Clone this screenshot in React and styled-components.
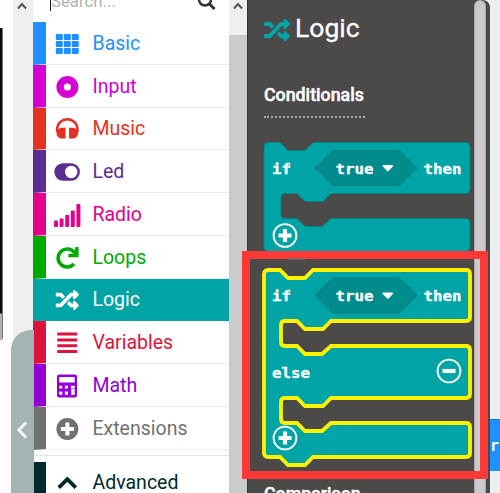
import React from 'react';
import styled, { createGlobalStyle } from 'styled-components';

const Global = createGlobalStyle`
  * { box-sizing: border-box; }
  body { margin: 0; overflow: hidden; font-family: Roboto, sans-serif; }
`;

const Screen = styled.div`
  position: relative;
  display: grid;
  grid-template-columns: 13px 20px 196px 18px 243px 10px;
  width: 500px;
  height: 493px;
  overflow: hidden;
  background: #fdfdff;
`;

const Simulator = styled.div`
  padding-top: 28px;
  overflow: hidden;
`;
const Device = styled.div`
  width: 3px;
  height: 312px;
  border-radius: 0 3px 10px 0;
  background: linear-gradient(#0a0a0a 0 285px, #b0b0b0 286px);
  border-right: 1px solid #777;
`;

const Scrollbar = styled.div`
  display: flex;
  flex-direction: column;
  background: #efefef;
`;
const ArrowUp = styled.svg`
  display: block;
  width: 10px;
  height: 8px;
  margin: 2px 0 0 4px;
  flex: none;
`;
const Thumb = styled.div`
  flex: 1;
  margin-top: 25px;
  background: #cbcbcb;
`;

const Toolbox = styled.nav`
  background: #fff;
  overflow: hidden;
`;
const Search = styled.div`
  display: flex;
  justify-content: space-between;
  height: 22px;
  padding: 0 13px 0 17px;
`;
const SearchText = styled.span`
  height: 20px;
  border-left: 1px solid #222;
  margin-top: -9px;
  font-size: 16.8px;
  line-height: 20px;
  color: #b0b0b0;
`;
const SearchIcon = styled.svg`
  width: 19px;
  height: 19px;
  margin-top: -9px;
`;
const Row = styled.div`
  display: flex;
  align-items: center;
  height: 42.75px;
  border-left: 13px solid ${p => p.$color};
  border-bottom: 1px solid ${p => (p.$active ? p.$color : '#e8eeee')};
  padding: 2.2px 0 0 7.2px;
  gap: 11.3px;
  font-size: 19.5px;
  color: ${p => (p.$active ? '#fff' : p.$color)};
  background: ${p => (p.$active ? p.$color : '#fff')};
`;
const RowIcon = styled.svg`
  width: 28px;
  height: 28px;
  flex: none;
  fill: currentColor;
`;
const RowLabel = styled.span`
  line-height: 24px;
`;
const Separator = styled.div`
  height: 12px;
  padding-top: 5px;
  &::after { content: ''; display: block; height: 1px; background: #dfe5e5; }
`;

const Flyout = styled.section`
  display: grid;
  grid-template-columns: 1fr 12px 4px;
  background: #4c4949;
  border-left: 1px solid #343232;
  border-radius: 0 7px 0 0;
  overflow: hidden;
`;
const FlyoutBody = styled.div`
  padding-left: 16px;
  overflow: hidden;
`;
const FlyoutThumb = styled.div`
  background: #cbc9cc;
  border: 1px solid #aaa8aa;
  border-bottom: 0;
  border-radius: 6px 6px 0 0;
`;
const Heading = styled.header`
  display: flex;
  align-items: center;
  gap: 5px;
  height: 56px;
  color: #fff;
  font-size: 26.5px;
  line-height: 30px;
  -webkit-text-stroke: 0.3px #fff;
`;
const HeadingIcon = styled.svg`
  width: 26px;
  height: 26px;
  margin-top: 3px;
  fill: #00a4a6;
  flex: none;
`;
const GroupTitle = styled.h2`
  width: 101px;
  height: 33px;
  margin: ${p => p.$top}px 0 0;
  border-bottom: 2px dotted #aaa8a8;
  font-size: 17.8px;
  line-height: 20px;
  font-weight: 500;
  -webkit-text-stroke: 0.45px #fff;
  color: #fff;
`;
const BlockCanvas = styled.svg`
  display: block;
  width: 226px;
  height: 345px;
  margin-top: 17px;
  overflow: visible;
  font: bold 14px 'DejaVu Sans Mono', monospace;
  fill: #fff;
  text { stroke: #fff; stroke-width: 0.3px; }
`;

const Workspace = styled.div`
  display: flex;
  align-items: flex-start;
  padding-top: 419px;
  background: #ebeff1;
  overflow: hidden;
`;
const WorkspaceBlock = styled.div`
  width: 10px;
  height: 52px;
  background: #1e90ff;
  border-top: 1px solid #1877d2;
  font: bold 15px/52px 'DejaVu Sans Mono', monospace;
  color: #fff;
`;

const CollapseTab = styled.button`
  position: absolute;
  left: 11px;
  top: 330px;
  width: 23px;
  height: 163px;
  display: flex;
  align-items: flex-start;
  padding: 91px 0 0 4px;
  border: 0;
  border-radius: 20px 0 0 0;
  background: #a5b3b4;
`;
const Highlight = styled.div`
  position: absolute;
  left: 242px;
  top: 251px;
  width: 245.5px;
  height: 228px;
  border: 8px solid #fd3836;
`;

const shuffle =
  'M504.971 359.029c9.373 9.373 9.373 24.569 0 33.941l-80 79.984c-15.01 15.01-40.971 4.49-40.971-16.971V416h-58.785a12.004 12.004 0 0 1-8.773-3.812l-70.556-75.596 53.333-57.143L352 336h32v-39.981c0-21.438 25.943-31.998 40.971-16.971l80 79.981zM12 176h84l52.781 56.551 53.333-57.143-70.556-75.596A11.999 11.999 0 0 0 122.785 96H12c-6.627 0-12 5.373-12 12v56c0 6.627 5.373 12 12 12zm372 0v39.984c0 21.46 25.961 31.98 40.971 16.971l80-79.984c9.373-9.373 9.373-24.569 0-33.941l-80-79.981C409.943 24.021 384 34.582 384 56.019V96h-58.785a12.004 12.004 0 0 0-8.773 3.812L96 336H12c-6.627 0-12 5.373-12 12v56c0 6.627 5.373 12 12 12h110.785c3.326 0 6.503-1.381 8.773-3.812L352 176h32z';

const icons = {
  Basic: [4, 11, 18].flatMap((y) =>
    [2.8, 10.8, 18.8].map((x) => <rect key={`${x}-${y}`} x={x} y={y} width="7" height="6" rx="1" />)
  ),
  Input: <path fillRule="evenodd" d="M14.400 3a11 11 0 1 0 0 22 11 11 0 0 0 0-22zm0 7.400a3.600 3.600 0 1 1 0 7.200 3.600 3.600 0 0 1 0-7.200z" />,
  Music: (
    <>
      <path d="M4.100 17v-2.600a10.200 10.200 0 0 1 20.400 0V17" fill="none" stroke="currentColor" strokeWidth="2.500" />
      <path d="M12.600 12.800v10.800H8.900a5.400 5.400 0 0 1 0-10.800zM16 12.800v10.800h3.700a5.400 5.400 0 0 0 0-10.800z" />
    </>
  ),
  Led: <path fillRule="evenodd" d="M10 5.300h8.200a8.700 8.700 0 0 1 0 17.400H10a8.700 8.700 0 0 1 0-17.400zm8.200 2.500a6.200 6.200 0 1 0 0 12.400 6.200 6.200 0 0 0 0-12.400z" />,
  Radio: [[1, 19.500], [6.600, 17.500], [12.200, 14], [17.800, 9.500], [23.400, 3]].map(([x, y]) => (
    <rect key={x} x={x} y={y} width="4" height={26 - y} rx="1" />
  )),
  Loops: (
    <>
      <path d="M21 19.800A9 9 0 1 1 21.500 8.800" fill="none" stroke="currentColor" strokeWidth="3.600" />
      <path d="M25.600 3v10.200H15.400V9.800h5.400L22.600 3z" />
    </>
  ),
  Logic: <path d={shuffle} transform="translate(2.8 2.5) scale(.045)" />,
  Variables: [3.600, 9.400, 15.200, 21].map((y) => <rect key={y} x="4.200" y={y} width="20" height="3" rx=".6" />),
  Math: (
    <path
      fillRule="evenodd"
      d="M6 2.600h16a2 2 0 0 1 2 2v19a2 2 0 0 1-2 2H6a2 2 0 0 1-2-2v-19a2 2 0 0 1 2-2zm.300 2.300v5.500h15.400V4.900zM6.300 13.700v2.800h3v-2.800zm5.600 0v2.800h3v-2.800zm6 0v2.800h3.800v-2.800zM6.300 19.500v3.200h3v-3.200zm5.600 0v3.200h3v-3.200zM18.300 17v6h3.400v-6z"
    />
  ),
  Extensions: <path fillRule="evenodd" d="M14.400 3a11 11 0 1 0 0 22 11 11 0 0 0 0-22zm-2 4.500h4V12h4.500v4h-4.500v4.500h-4V16H7.900v-4h4.500z" />,
  Advanced: <path d="M5.800 18.700 14.300 10.200l8.500 8.500" fill="none" stroke="currentColor" strokeWidth="3.800" />,
};

const categories = [
  ['Basic', '#1e90ff'],
  ['Input', '#d400d4'],
  ['Music', '#e63022'],
  ['Led', '#5c2d91'],
  ['Radio', '#e3008c'],
  ['Loops', '#00aa00'],
  ['Logic', '#00a4a6'],
  ['Variables', '#dc143c'],
  ['Math', '#9400d3'],
  ['Extensions', '#717171'],
];

const Category = ({ name, color }) => (
  <Row $color={color} $active={name === 'Logic'}>
    <RowIcon viewBox="0 0 28 28">{icons[name]}</RowIcon>
    <RowLabel>{name}</RowLabel>
  </Row>
);

const ScrollArrow = () => (
  <ArrowUp viewBox="0 0 10 8">
    <path d="M1 6.500 5 2l4 4.500" fill="none" stroke="#555" strokeWidth="2" />
  </ArrowUp>
);

// Block outlines are drawn in block-local coordinates with the top left corner at 0,0.
const notch = 'h12l8 8h17l8-8';
const mouth = 'H67l-8 8H41l-8-8H21q-4 0-4 4v17q0 4 4 4h12l8 8h17l9-8';
const right = 'H202q4 0 4 4';
const ifPath = `M0 4q0-4 4-4${notch}${right}V47q0 4-4 4${mouth}${right}v25q0 4-4 4H49l-8 8H24l-8-8H4q-4 0-4-4z`;
const ifElsePath = `M0 4q0-4 4-4${notch}${right}V47q0 4-4 4${mouth}${right}V124q0 4-4 4${mouth}${right}v26q0 4-4 4H49l-8 8H24l-8-8H4q-4 0-4-4z`;

const BlockText = ({ x, y, width, children }) => (
  <text x={x} y={y} textLength={width} lengthAdjust="spacingAndGlyphs">{children}</text>
);

const Condition = () => (
  <>
    <BlockText x={8} y={31} width={19}>if</BlockText>
    <path d="M51 25.500 68.500 8h67L153 25.500 135.500 43h-67z" fill="#008b8d" stroke="#007f81" />
    <BlockText x={71.500} y={31} width={38}>true</BlockText>
    <path d="M119.500 22.500h8.500q2 0 .8 1.600l-4 4.200q-1 1-2 0l-4-4.200q-1.200-1.600.7-1.600z" />
    <BlockText x={159.500} y={31} width={38}>then</BlockText>
  </>
);

const RoundButton = ({ x, y, plus }) => (
  <g transform={`translate(${x} ${y})`}>
    <circle r="11.400" fill="none" stroke="#fff" strokeWidth="1.900" />
    <path d={plus ? 'M-6.500 0h13M0-6.500v13' : 'M-6.500 0h13'} stroke="#fff" strokeWidth="4.200" />
  </g>
);

export default function App() {
  return (
    <Screen>
      <Global />
      <Simulator><Device /></Simulator>
      <Scrollbar><ScrollArrow /></Scrollbar>
      <Toolbox>
        <Search>
          <SearchText>Search...</SearchText>
          <SearchIcon viewBox="0 0 19 19">
            <circle cx="8" cy="8.500" r="6" fill="none" stroke="#333" strokeWidth="2.500" />
            <path d="m12 12.500 5.500 5.500" stroke="#333" strokeWidth="3" />
          </SearchIcon>
        </Search>
        {categories.map(([name, color]) => <Category key={name} name={name} color={color} />)}
        <Separator />
        <Category name="Advanced" color="#002a2d" />
      </Toolbox>
      <Scrollbar><ScrollArrow /><Thumb /></Scrollbar>
      <Flyout>
        <FlyoutBody>
          <Heading>
            <HeadingIcon viewBox="0 0 512 512"><path d={shuffle} /></HeadingIcon>
            Logic
          </Heading>
          <GroupTitle $top={29}>Conditionals</GroupTitle>
          <BlockCanvas viewBox="0 0 226 345">
            <g transform="translate(0 7.500)">
              <path d={ifPath} fill="#00a4a6" stroke="#008385" />
              <Condition />
              <RoundButton x={21} y={93} plus />
            </g>
            <g transform="translate(0 135)">
              <path d={ifElsePath} fill="#00a4a6" stroke="#fff200" strokeWidth="3.800" />
              <Condition />
              <BlockText x={8} y={108} width={38}>else</BlockText>
              <RoundButton x={185} y={101} />
              <RoundButton x={21} y={168} plus />
            </g>
          </BlockCanvas>
          <GroupTitle $top={4}>Comparison</GroupTitle>
        </FlyoutBody>
        <FlyoutThumb />
      </Flyout>
      <Workspace><WorkspaceBlock>r</WorkspaceBlock></Workspace>
      <CollapseTab aria-label="Collapse">
        <svg width="14" height="18" viewBox="0 0 14 18">
          <path d="M11 1.500 4 9l7 7.500" fill="none" stroke="#f5f7f7" strokeWidth="3" />
        </svg>
      </CollapseTab>
      <Highlight />
    </Screen>
  );
}
